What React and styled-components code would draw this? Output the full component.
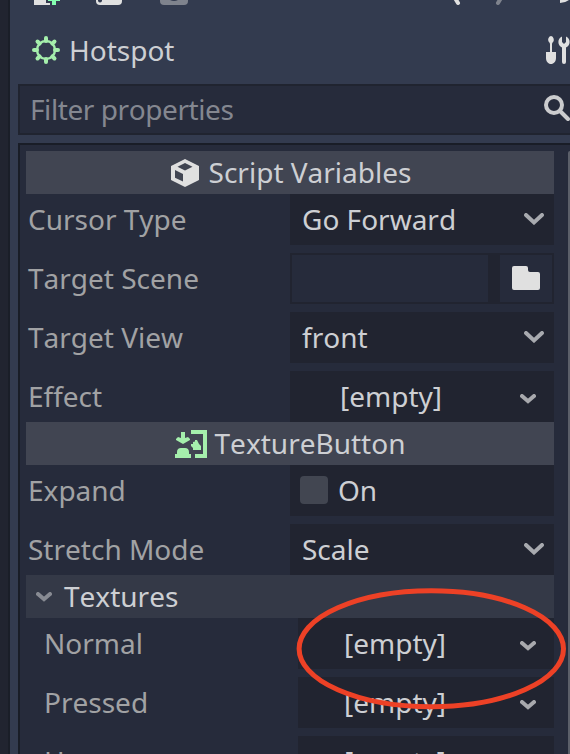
import React from "react";
import styled, { createGlobalStyle } from "styled-components";

const GlobalStyle = createGlobalStyle`
  * { box-sizing: border-box; }
  body {
    margin: 0;
    overflow: hidden;
    background: #333b4f;
    font-family: "Noto Sans", sans-serif;
    font-size: 28px;
    font-kerning: none;
    color: #cdcfd3;
  }
  svg { display: block; flex: none; }
`;

const Window = styled.div`
  position: relative;
  display: flex;
  width: 570px;
  height: 754px;
  overflow: hidden;
  background: #333b4f;
`;

const DockEdge = styled.div`
  flex: none;
  width: 10px;
  background: #212430;
  border-right: 2px solid #1a1e28;
`;

const Dock = styled.main`
  flex: 1;
  min-width: 0;
  display: flex;
  flex-direction: column;
  padding-left: 8px;
`;

const Toolbar = styled.div`
  flex: none;
  height: 6px;
`;

const ObjectBar = styled.header`
  flex: none;
  display: flex;
  align-items: center;
  justify-content: space-between;
  height: 78px;
  padding: 10px 0 0 14px;
`;

const ObjectName = styled.div`
  display: flex;
  align-items: center;
  gap: 9px;
  line-height: 44px;
`;

const Filter = styled.div`
  flex: none;
  display: flex;
  align-items: center;
  justify-content: space-between;
  height: 51px;
  padding-left: 10px;
  border: 2px solid #202430;
  border-right: 0;
  background: #262b3b;
  color: #848790;
  line-height: 47px;
  letter-spacing: -0.42px;

  svg { margin-bottom: 2px; }
`;

const Inspector = styled.section`
  flex: 1;
  min-height: 0;
  display: flex;
  justify-content: space-between;
  margin-top: 8px;
  padding: 6px 0 0 6px;
  border: 2px solid #191d27;
  border-right: 0;
  border-bottom: 0;
  background: #262b3b;
  overflow: hidden;
`;

const PropertyList = styled.div`
  width: 528px;
`;

const ScrollBar = styled.div`
  width: 2px;
  background: #5b5f69;
  border-top-left-radius: 2px;
`;

const Category = styled.div`
  display: flex;
  align-items: center;
  justify-content: center;
  gap: ${(p) => p.$gap}px;
  height: 43px;
  padding-left: ${(p) => p.$shift || 0}px;
  line-height: 43px;
  background: #414552;
`;

const Group = styled.div`
  display: flex;
  align-items: center;
  gap: 12px;
  height: 43px;
  padding-left: 10px;
  line-height: 43px;
  background: #343947;
`;

const Row = styled.div`
  display: flex;
  justify-content: space-between;
  height: 51px;
  margin-bottom: ${(p) => (p.$last ? 0 : 8)}px;
  padding-left: ${(p) => (p.$nested ? 18 : 2)}px;
  line-height: 51px;
`;

const Name = styled.span`
  color: #a1a2a4;
  white-space: nowrap;
`;

const Value = styled.div`
  display: flex;
  align-items: center;
  justify-content: space-between;
  width: ${(p) => (p.$nested ? 256 : 264)}px;
  padding: 0 10px 0 12px;
  background: #212430;

  svg { margin-bottom: 1px; }
`;

const Resource = styled(Value)`
  padding: 0 18px 0 ${(p) => (p.$nested ? 46 : 50)}px;

  svg { margin: 5px 0 0; }
`;

const CheckValue = styled(Value)`
  justify-content: flex-start;
  gap: 10px;
  padding-left: 10px;
`;

const CheckBox = styled.span`
  width: 28px;
  height: 28px;
  margin-bottom: 1px;
  border-radius: 4px;
  background: #424651;
`;

const FileValue = styled(Value)`
  padding: 2px;
`;

const PathField = styled.div`
  width: 196px;
  height: 47px;
  background: #262b3b;
`;

const BrowseButton = styled.div`
  display: flex;
  align-items: center;
  justify-content: center;
  width: 52px;
  height: 47px;
  background: #262b3b;
`;

const TopIcons = styled.svg`
  position: absolute;
  left: 0;
  top: 0;
`;

const Highlight = styled.svg`
  position: absolute;
  left: 290px;
  top: 580px;
`;

const Arrow = () => (
  <svg width="20" height="12" viewBox="0 0 20 12">
    <path d="M2 2 10 9.400 18 2" fill="none" stroke="#a8aaaf" strokeWidth="4" strokeLinecap="round" />
  </svg>
);

const SmallArrow = ({ color = "#a8a9ad" }) => (
  <svg width="16" height="10" viewBox="0 0 16 10">
    <path d="M2 2 8 7.200 14 2" fill="none" stroke={color} strokeWidth="4" strokeLinecap="round" />
  </svg>
);

const Gear = () => (
  <svg width="28" height="28" viewBox="0 0 28 28" stroke="#a5efac" fill="none">
    <circle cx="14" cy="14" r="9" strokeWidth="2.400" />
    {[0, 45, 90, 135, 180, 225, 270, 315].map((a) => (
      <path key={a} transform={`rotate(${a} 14 14)`} d="M14 2V5" strokeWidth="4" strokeLinecap="round" />
    ))}
  </svg>
);

const Tools = () => (
  <svg width="24" height="28" viewBox="0 0 24 28" fill="#e0e0e0">
    <path d="M5 0C3 0 2 3 2.200 4.200 2.400 6 4 6.600 4 8v8H0v6c0 3.500 2.200 6 5 6s5-2.500 5-6v-6H6V8c0-1.400 1.600-2 1.800-3.800C8 3 7 0 5 0z" />
    <path d="M16 .5A6 6 0 0 0 16 11.500V26a2 2 0 0 0 4 0V11.500A6 6 0 0 0 20 .5V6l-2 2-2-2z" />
  </svg>
);

const Search = () => (
  <svg width="26" height="27" viewBox="0 0 26 27" fill="none" stroke="#cbccce" strokeWidth="4">
    <circle cx="10" cy="10" r="8" />
    <path d="M16 16 24 24" strokeLinecap="round" />
  </svg>
);

const Cube = () => (
  <svg width="28" height="28" viewBox="0 0 28 28">
    <path
      fill="#e0e0e0"
      fillRule="evenodd"
      d="M14 0 28 7V21L14 28 0 21V7zM14 4 6.500 7.800 14 11.500 21.500 7.800zM4 11V18.700L12 22.500V15z"
    />
  </svg>
);

const TextureButtonIcon = () => (
  <svg width="32" height="28" viewBox="0 0 32 28" fill="#a5efac">
    <path d="M16 0H32V28H20V24H28V4H16z" />
    <path d="M6 2h4v6l3-1 2 2v1l-7 4-7-4V9l2-2 3 1z" />
    <path d="M0 28v-4h2v-2c0-2.500 1.500-4 4-4h4c2.500 0 4 1.500 4 4v2h2v4z" />
    <path d="M20 10h2l2 4 2 2v4h-8v-2l-2-2v-2h2v-2l2-.5z" />
  </svg>
);

const Folder = () => (
  <svg width="28" height="24" viewBox="0 0 28 24" fill="#e0e0e0">
    <path d="M2 0H14a2 2 0 0 1 2 2V4a2 2 0 0 0 2 2H26a2 2 0 0 1 2 2V22a2 2 0 0 1-2 2H2a2 2 0 0 1-2-2V2a2 2 0 0 1 2-2z" />
  </svg>
);

const SelectRow = ({ name, value, last }) => (
  <Row $last={last}>
    <Name>{name}</Name>
    <Value>
      {value}
      <Arrow />
    </Value>
  </Row>
);

const ResourceRow = ({ name, last, nested }) => (
  <Row $last={last} $nested={nested}>
    <Name>{name}</Name>
    <Resource $nested={nested}>
      [empty]
      <SmallArrow />
    </Resource>
  </Row>
);

export default function App() {
  return (
    <Window>
      <GlobalStyle />
      <DockEdge />
      <Dock>
        <Toolbar />
        <ObjectBar>
          <ObjectName>
            <Gear />
            Hotspot
          </ObjectName>
          <Tools />
        </ObjectBar>
        <Filter>
          Filter properties
          <Search />
        </Filter>
        <Inspector>
          <PropertyList>
            <Category $gap={10} $shift={2}>
              <Cube />
              Script Variables
            </Category>
            <SelectRow name="Cursor Type" value="Go Forward" />
            <Row>
              <Name>Target Scene</Name>
              <FileValue>
                <PathField />
                <BrowseButton>
                  <Folder />
                </BrowseButton>
              </FileValue>
            </Row>
            <SelectRow name="Target View" value="front" />
            <ResourceRow name="Effect" last />
            <Category $gap={8}>
              <TextureButtonIcon />
              TextureButton
            </Category>
            <Row>
              <Name>Expand</Name>
              <CheckValue>
                <CheckBox />
                On
              </CheckValue>
            </Row>
            <SelectRow name="Stretch Mode" value="Scale" last />
            <Group>
              <SmallArrow color="#888b93" />
              Textures
            </Group>
            <ResourceRow name="Normal" nested />
            <ResourceRow name="Pressed" nested />
            <ResourceRow name="Hover" nested />
          </PropertyList>
          <ScrollBar />
        </Inspector>
      </Dock>
      <TopIcons width="570" height="6" viewBox="0 0 570 6">
        <path d="M34 0H46V3H50V5H34z" fill="#e0e0e0" />
        <path d="M48 0H60V1H56V5H52V1H48z" fill="#84ffb1" />
        <path d="M96 0H122V1A4 4 0 0 1 118 5H100A4 4 0 0 1 96 1z" fill="#e0e0e0" />
        <circle cx="100" cy="0.500" r="2" fill="#333b4f" />
        <path d="M160 0H188V1A4 4 0 0 1 184 5H164A4 4 0 0 1 160 1z" fill="#7f838d" />
        <path d="M170 0H178Q174 2 170 0z" fill="#333b4f" />
        <path d="M455 -2 458 3" stroke="#e0e0e0" strokeWidth="4" strokeLinecap="round" />
        <path d="M501 -2 498 3" stroke="#7f838d" strokeWidth="4" strokeLinecap="round" />
        <path d="M560 0H569Q565 3 560 3z" fill="#e0e0e0" />
      </TopIcons>
      <Highlight width="280" height="140" viewBox="0 0 280 140">
        <ellipse cx="141.300" cy="68.800" rx="132.200" ry="58" fill="none" stroke="#ed4126" strokeWidth="5" />
      </Highlight>
    </Window>
  );
}
